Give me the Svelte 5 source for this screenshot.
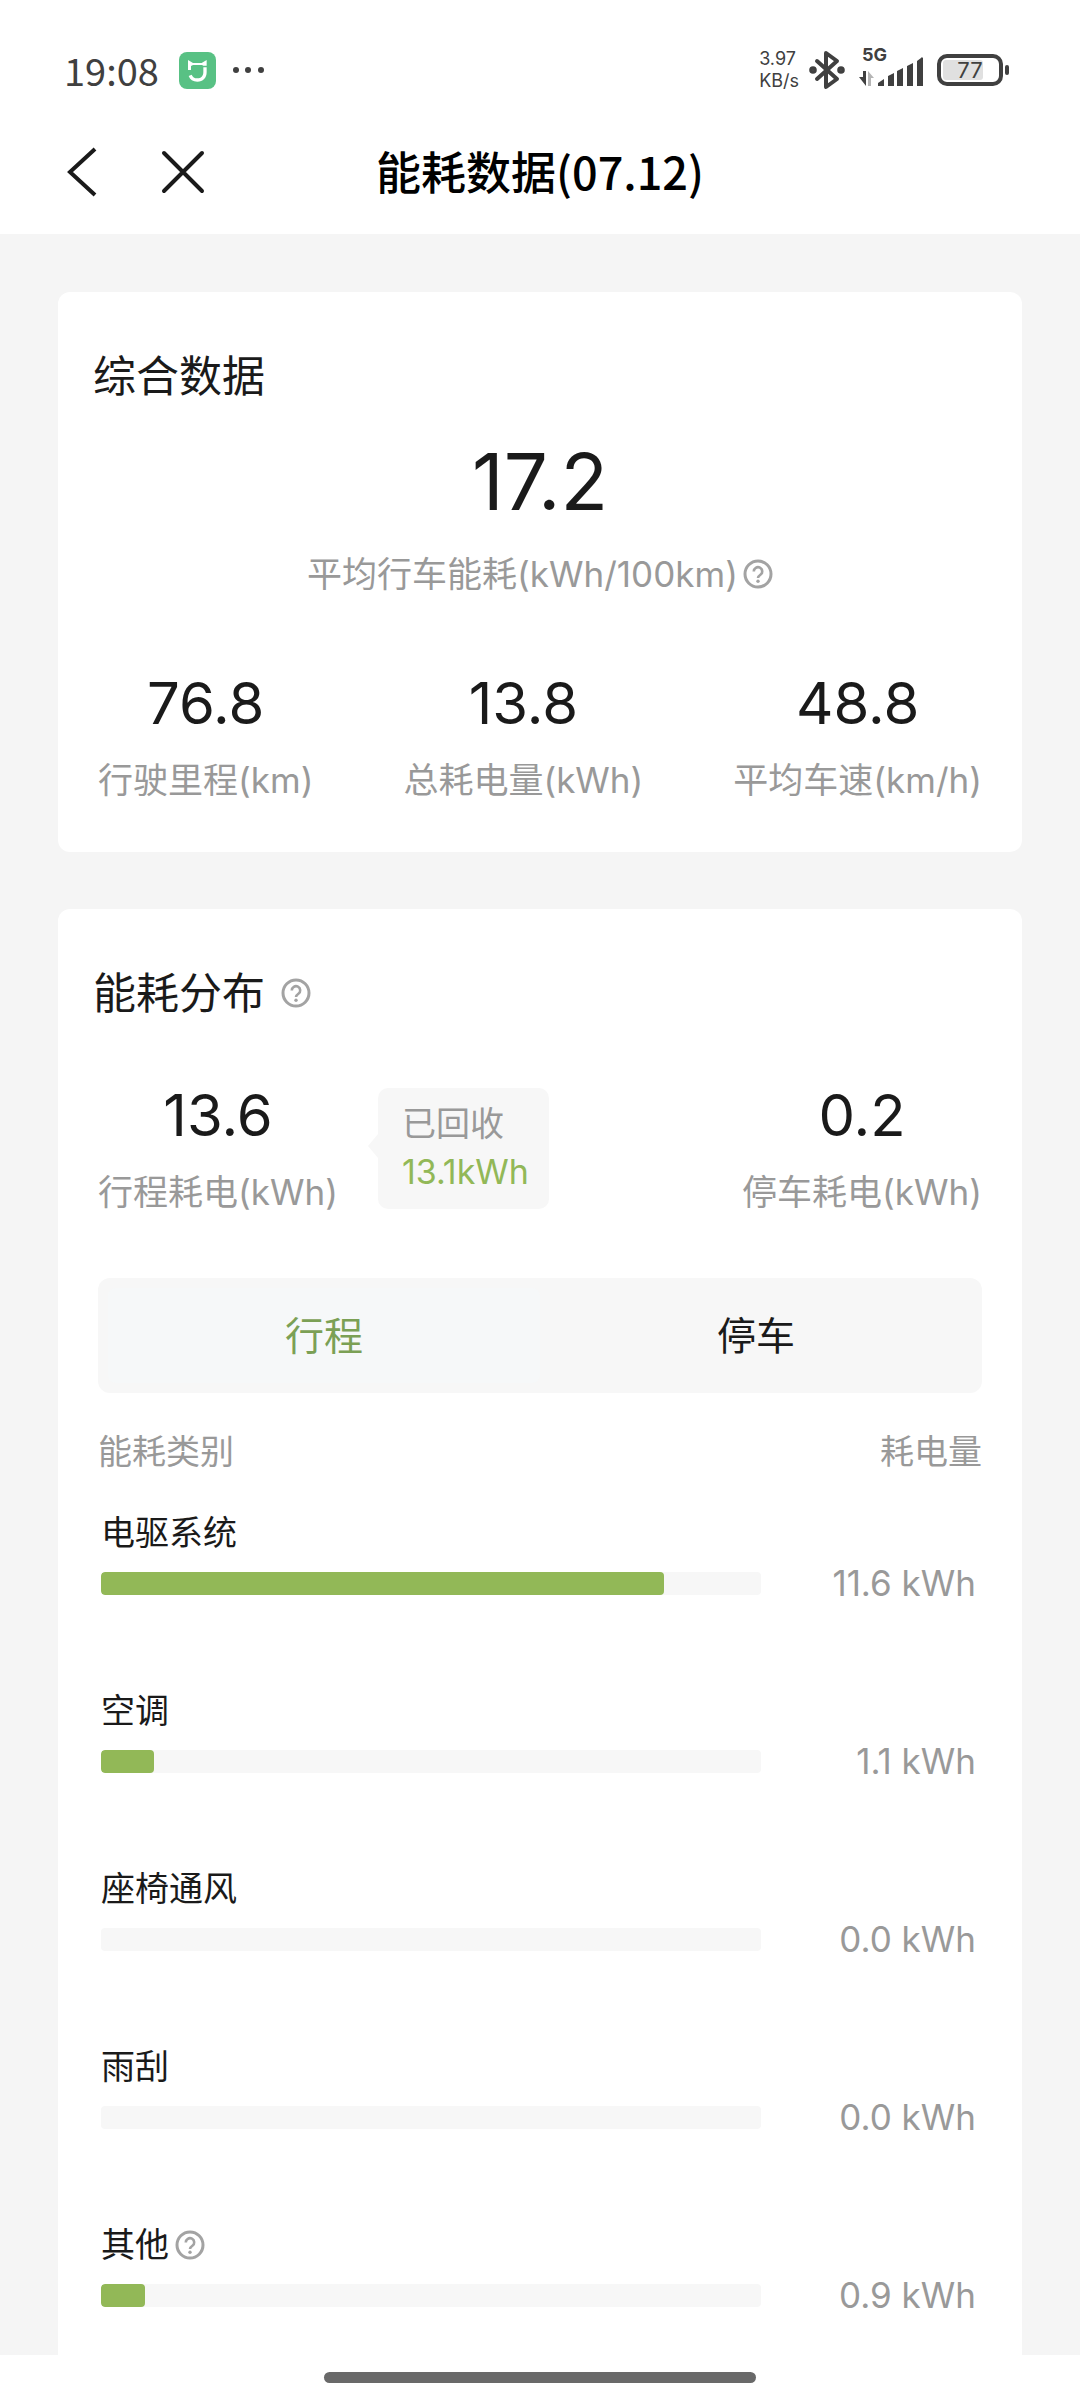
<script>
  // Daily energy report: trip summary on top, consumption split below.

  const stats = [
    { value: "76.8", label: "行驶里程(km)" },
    { value: "13.8", label: "总耗电量(kWh)" },
    { value: "48.8", label: "平均车速(km/h)" },
  ];

  const TABS = ["行程", "停车"];
  const total = 13.6;
  const rows = [
    { name: "电驱系统", kwh: 11.6 },
    { name: "空调", kwh: 1.1 },
    { name: "座椅通风", kwh: 0 },
    { name: "雨刮", kwh: 0 },
    { name: "其他", kwh: 0.9, help: true },
  ];

  let tab = $state(0);
</script>

{#snippet help()}
  <button class="help" aria-label="说明">
    <svg viewBox="0 0 30 30" width="30" height="30" fill="none" stroke="#a3a3a3" stroke-width="3">
      <circle cx="15" cy="15" r="13" />
      <path d="M10.8 12.4a4.2 4.2 0 1 1 6.6 3.4c-1.7 1.2-2.4 1.7-2.4 3.2" stroke-width="2.6" />
      <circle cx="15" cy="22.3" r="1.7" fill="#a3a3a3" stroke="none" />
    </svg>
  </button>
{/snippet}

<div class="page">
  <div class="status">
    <span class="time">19:08</span>
    <svg class="app-icon" viewBox="0 0 111 111" width="37" height="37">
      <rect width="111" height="111" rx="24" fill="#58c184" />
      <path d="M27 54V24l15 9h26l15-9v17h-10l-4-2H42l-6 3v12z" fill="#fff" />
      <path d="M73 46h10v14c0 18-11 29-28 29-13 0-22-6-26-17l9-4c3 7 8 11 17 11 11 0 18-7 18-19z" fill="#fff" />
    </svg>
    <svg viewBox="0 0 32 8" width="32" height="8" fill="#404040">
      <circle cx="4" cy="4" r="3" /><circle cx="16" cy="4" r="3" /><circle cx="29" cy="4" r="3" />
    </svg>
    <div class="speed"><div>3.97</div><div>KB/s</div></div>
    <svg class="bt" viewBox="0 0 36 40" width="36" height="40" fill="none" stroke="#404040" stroke-width="4" stroke-linejoin="round" stroke-linecap="round">
      <path d="M8 11l20 18-11 8V3l11 8L8 29" />
      <circle cx="4" cy="20" r="1.8" /><circle cx="32" cy="20" r="1.8" />
    </svg>
    <div class="cell">
      <span class="net">5G</span>
      <svg viewBox="0 0 64 34" width="64" height="34" fill="#404040">
        <path d="M0 24h4v-6h3v15z" />
        <path d="M9 33V18l6 7h-3v8z" fill="#b5b5b5" />
        <path d="M19 33v-3l6-4v7zM29 33V23l6-3v13zM38 33V18l6-3v18zM48 33V13l6-3v23zM58 33V8l4-3a1 1 0 0 1 2 1v27z" />
      </svg>
    </div>
    <div class="battery"><span>77</span></div>
  </div>

  <header>
    <button class="nav" aria-label="返回">
      <svg viewBox="0 0 32 50" width="32" height="50" fill="none" stroke="#1a1a1a" stroke-width="4"><path d="M29 2L4 25l25 23" /></svg>
    </button>
    <button class="nav" aria-label="关闭">
      <svg viewBox="0 0 46 46" width="46" height="46" fill="none" stroke="#1a1a1a" stroke-width="4" stroke-linecap="round"><path d="M4 4l38 38M42 4L4 42" /></svg>
    </button>
    <h1>能耗数据(07.12)</h1>
  </header>

  <main>
    <section class="card">
      <h2>综合数据</h2>
      <div class="hero">17.2</div>
      <div class="hero-label">平均行车能耗(kWh/100km){@render help()}</div>
      <div class="stats">
        {#each stats as s}
          <div class="stat">
            <div class="num">{s.value}</div>
            <div class="label">{s.label}</div>
          </div>
        {/each}
      </div>
    </section>

    <section class="card grow">
      <h2>能耗分布 {@render help()}</h2>
      <div class="split">
        <div class="stat">
          <div class="num">13.6</div>
          <div class="label">行程耗电(kWh)</div>
        </div>
        <div class="bubble">
          <div>已回收</div>
          <div class="green">13.1kWh</div>
        </div>
        <div class="stat last">
          <div class="num">0.2</div>
          <div class="label">停车耗电(kWh)</div>
        </div>
      </div>

      <div class="tabs" role="tablist">
        {#each TABS as t, i}
          <button class="tab" class:active={tab === i} role="tab" aria-selected={tab === i} onclick={() => { tab = i; }}>{t}</button>
        {/each}
      </div>

      <table>
        <thead>
          <tr><th>能耗类别</th><th class="right">耗电量</th></tr>
        </thead>
        <tbody>
          {#each rows as r}
            <tr>
              <td>
                <div class="name">{r.name}{#if r.help}{@render help()}{/if}</div>
                <div class="track"><div class="fill" style="width:{(r.kwh / total) * 100}%"></div></div>
              </td>
              <td class="value">{r.kwh.toFixed(1)} kWh</td>
            </tr>
          {/each}
        </tbody>
      </table>
    </section>
  </main>

  <footer><div class="home"></div></footer>
</div>

<style>
  :global(body) { background: #fff; }
  .page {
    min-height: 100vh; display: flex; flex-direction: column; background: #fff; color: #1a1a1a;
    font-family: Inter, "Noto Sans CJK SC", sans-serif; font-size: 34px; line-height: 40px;
  }
  button { font: inherit; color: inherit; background: none; border: none; padding: 0; cursor: pointer; }
  svg { display: block; flex: none; }
  h1, h2 { margin: 0; }

  .status { display: flex; align-items: center; height: 140px; padding: 0 77px 0 64px; box-sizing: border-box; color: #404040; }
  .time { font-family: "Noto Sans CJK SC", sans-serif; font-size: 38px; line-height: 38px; }
  .app-icon { margin: 0 16px 0 20px; }
  .speed { margin-left: auto; font-size: 18px; line-height: 22px; }
  .bt { margin: 0 14px 0 10px; }
  .cell { position: relative; }
  .net { position: absolute; left: 3px; top: -8px; font-size: 18px; line-height: 20px; font-weight: 700; }
  .battery {
    position: relative; margin-left: 14px; width: 66px; height: 32px; box-sizing: border-box;
    border: 4px solid #404040; border-radius: 10px; padding: 2px;
    font-size: 22px; line-height: 20px; text-align: center;
  }
  .battery::before { content: ""; position: absolute; inset: 2px 16px 2px 2px; background: #e0e0e0; border-radius: 3px; }
  .battery::after { content: ""; position: absolute; right: -10px; top: 7px; width: 4px; height: 10px; border-radius: 2px; background: #404040; }
  .battery span { position: relative; }

  header { position: relative; display: flex; align-items: center; gap: 62px; height: 94px; padding: 0 66px 30px; box-sizing: border-box; }
  .nav { position: relative; z-index: 1; }
  h1 {
    position: absolute; inset: 0 0 30px; font-family: "Noto Sans CJK SC", sans-serif;
    font-size: 45px; line-height: 62px; font-weight: 500; text-align: center; color: #000;
  }

  main { flex: 1; display: flex; flex-direction: column; gap: 57px; padding: 58px 58px 0; background: #f5f5f5; }
  .card { background: #fff; border-radius: 12px; padding: 53px 40px 52px; }
  .grow { flex: 1; border-radius: 12px 12px 0 0; padding-bottom: 0; }
  h2 { display: flex; align-items: center; gap: 16px; margin-left: -5px; font-size: 43px; line-height: 62px; font-weight: 400; }
  .help { flex: none; }
  .hero { margin-top: 25px; font-size: 78px; line-height: 100px; text-align: center; }
  .hero-label { display: flex; justify-content: center; align-items: center; gap: 5px; margin-top: 22px; font-size: 35px; color: #999; }
  .stats { display: flex; justify-content: space-between; margin-top: 74px; }
  .stat { text-align: center; }
  .num { font-size: 58px; line-height: 70px; }
  .label { margin-top: 22px; font-size: 35px; color: #999; }

  .split { display: flex; align-items: flex-start; margin-top: 56px; }
  .bubble { position: relative; margin: 8px 0 0 40px; padding: 12px 20px 13px 24px; background: #f7f7f7; border-radius: 10px; color: #999; line-height: 48px; }
  .bubble::before {
    content: ""; position: absolute; left: -10px; top: 46px;
    border: solid transparent; border-width: 12px 10px 12px 0; border-right-color: #f7f7f7;
  }
  .green { color: #92b857; }
  .last { margin-left: auto; }

  .tabs { display: flex; margin-top: 66px; padding: 10px; background: #f7f7f7; border-radius: 12px; }
  .tab { flex: 1; height: 95px; font-size: 39px; border-radius: 8px; }
  .active { color: #7ba055; background: #f6f8f9; }

  table { width: 100%; margin-top: 39px; border-collapse: collapse; }
  th { width: 75%; padding: 0; font-weight: 400; text-align: left; color: #999; }
  .right { width: 25%; text-align: right; }
  td { padding: 41px 0 55px 3px; vertical-align: top; }
  tr:last-child td { padding-bottom: 40px; }
  .name { display: flex; align-items: center; gap: 6px; }
  .track { margin-top: 19px; height: 23px; background: #f7f7f7; border-radius: 4px; overflow: hidden; }
  .fill { height: 100%; background: #92b857; border-radius: 4px; }
  .value { padding: 91px 6px 0 0; font-size: 35px; text-align: right; color: #999; }

  footer { display: flex; justify-content: center; align-items: center; height: 45px; background: #fff; }
  .home { width: 40%; height: 11px; border-radius: 6px; background: #696969; }
</style>
